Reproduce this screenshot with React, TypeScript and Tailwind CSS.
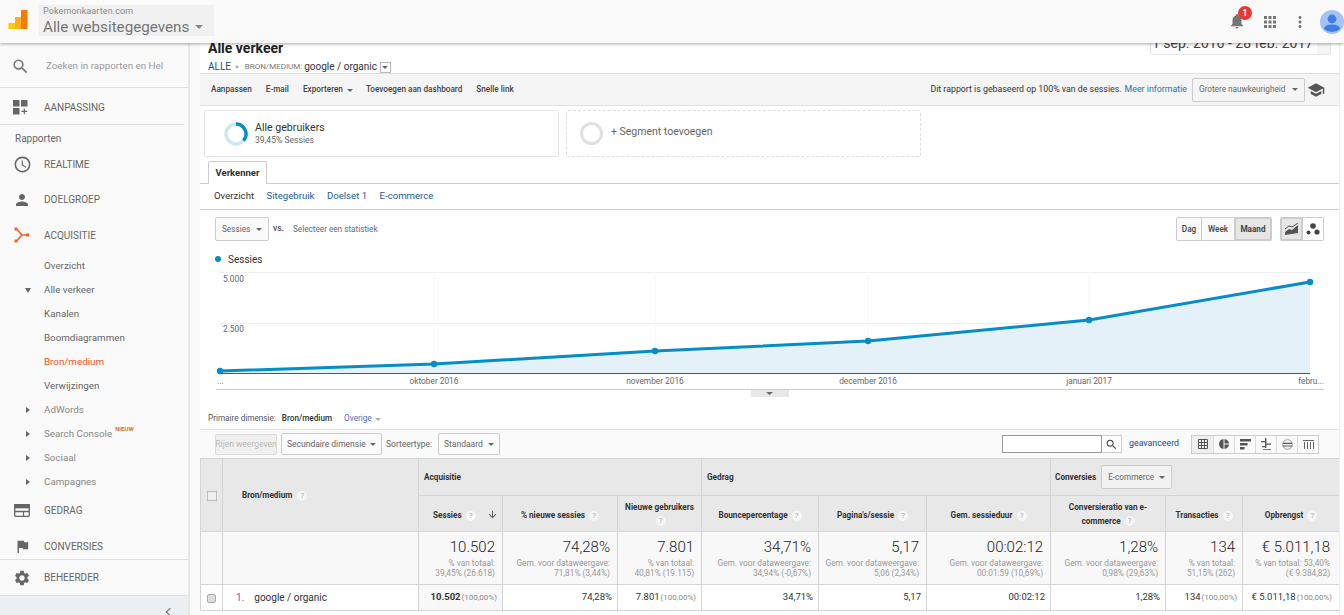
import React from "react";
import { MdPerson, MdAccessTime, MdFlag, MdSettings, MdNotifications, MdApps, MdMoreVert, MdSchool, MdSearch, MdArrowDownward, MdGridOn, MdPieChart } from "react-icons/md";

function Caret({ small, className = "" }: { small?: boolean; className?: string }) {
  return (
    <span
      className={`inline-block w-0 h-0 border-x-transparent ${small ? "border-x-[3px] border-t-[3px]" : "border-x-[4px] border-t-[4px]"} ${className || "border-t-[#666]"}`}
    />
  );
}

function Help({ className = "" }: { className?: string }) {
  return (
    <span className={`inline-flex w-[10px] h-[10px] rounded-full bg-[#f6f6f6] text-[#aaa] text-[8px] font-normal leading-none items-center justify-center align-middle ${className}`}>
      ?
    </span>
  );
}

function Logo() {
  return (
    <svg width="20" height="20" viewBox="0 0 20 20" className="-mt-[3px]">
      <rect x="0.5" y="13" width="7" height="6" rx="0.5" fill="#fdc90f" />
      <rect x="7" y="7" width="7" height="12" fill="#fbb016" />
      <rect x="13" y="0" width="6.5" height="19" rx="0.5" fill="#f57c00" />
    </svg>
  );
}

function CustomIcon() {
  return (
    <svg width="15" height="15" viewBox="0 0 15 15" fill="#666">
      <rect x="0" y="0" width="6.5" height="6.5" />
      <rect x="8" y="0" width="6.5" height="6.5" />
      <rect x="0" y="8" width="6.5" height="6.5" />
      <path d="M10.7 8.5h1.2v2.2h2.3v1.2h-2.3v2.3h-1.2v-2.3H8.4v-1.2h2.3z" />
    </svg>
  );
}

function AcqIcon() {
  return (
    <svg width="16" height="16" viewBox="0 0 16 16" fill="none" stroke="#f26522" strokeWidth="1.6">
      <path d="M2.5 2 L8 8 L2.5 14 M8 8 H14" />
      <rect x="0.5" y="0.5" width="3" height="3" fill="#f26522" stroke="none" />
      <rect x="0.5" y="12.5" width="3" height="3" fill="#f26522" stroke="none" />
      <circle cx="13.5" cy="8" r="1.8" fill="#f26522" stroke="none" />
    </svg>
  );
}

function BehaviorIcon() {
  return (
    <svg width="16" height="13" viewBox="0 0 16 13" fill="none" stroke="#666" strokeWidth="1.3">
      <rect x="0.7" y="0.7" width="14.6" height="11.6" rx="1" />
      <rect x="0.7" y="0.7" width="14.6" height="3" fill="#666" />
      <path d="M0.7 7.5 H15.3 M9.5 7.5 V12.3" />
    </svg>
  );
}

function NavMain({ icon, label }: { icon: React.ReactNode; label: string }) {
  return (
    <div className="h-[36px] flex items-center">
      <div className="w-[44px] flex justify-center text-[#666]">{icon}</div>
      <span className="text-[10px] text-[#666]">{label}</span>
    </div>
  );
}

function NavSub({ label, arrow, active, badge }: { label: string; arrow?: "down" | "right"; active?: boolean; badge?: boolean }) {
  return (
    <div className="h-[24px] flex items-center relative pl-[44px]">
      {arrow === "down" && <span className="absolute left-[25px] top-[10px] w-0 h-0 border-x-[3px] border-x-transparent border-t-[5px] border-t-[#666]" />}
      {arrow === "right" && <span className="absolute left-[26px] top-[9px] w-0 h-0 border-y-[3px] border-y-transparent border-l-[4px] border-l-[#666]" />}
      <span className={`text-[9.8px] ${active ? "text-[#f4511e]" : arrow === "right" ? "text-[#888]" : "text-[#666]"}`}>{label}</span>
      {badge && <sup className="text-[6px] font-bold text-[#e8710a] ml-[3px] -mt-[4px]">NIEUW</sup>}
    </div>
  );
}

function Sidebar() {
  return (
    <aside className="w-[188px] h-[572px] shrink-0 bg-[#fafafa] flex flex-col overflow-hidden">
      <div className="h-[45px] shrink-0 flex items-center border-b border-[#e0e0e0] pt-[3px]">
        <div className="w-[40px] flex justify-center">
          <MdSearch size={19} className="text-[#777]" />
        </div>
        <span className="ml-[6px] text-[9.8px] text-[#999]">Zoeken in rapporten en Hel</span>
      </div>
      <div className="h-[37px] shrink-0 flex items-center mr-[4px] border-b border-[#e0e0e0] pt-[3px]">
        <div className="w-[44px] flex justify-center pr-[3px]">
          <CustomIcon />
        </div>
        <span className="text-[10px] text-[#666]">AANPASSING</span>
      </div>
      <div className="h-[20px] shrink-0 pl-[15px] flex items-center text-[10px] text-[#666] mt-[3px]">Rapporten</div>
      <div className="-mt-[2px]">
        <NavMain icon={<MdAccessTime size={19} />} label="REALTIME" />
      </div>
      <NavMain icon={<MdPerson size={18} />} label="DOELGROEP" />
      <NavMain icon={<AcqIcon />} label="ACQUISITIE" />
      <div className="mt-[1px] -mb-[1px]">
        <NavSub label="Overzicht" />
        <NavSub label="Alle verkeer" arrow="down" />
        <NavSub label="Kanalen" />
        <NavSub label="Boomdiagrammen" />
        <NavSub label="Bron/medium" active />
        <NavSub label="Verwijzingen" />
        <NavSub label="AdWords" arrow="right" />
        <NavSub label="Search Console" arrow="right" badge />
        <NavSub label="Sociaal" arrow="right" />
        <NavSub label="Campagnes" arrow="right" />
      </div>
      <NavMain icon={<BehaviorIcon />} label="GEDRAG" />
      <NavMain icon={<MdFlag size={17} />} label="CONVERSIES" />
      <div className="-mt-[5px] border-t border-[#e0e0e0] h-[37px] shrink-0 flex items-center border-b">
        <div className="w-[44px] flex justify-center">
          <MdSettings size={18} className="text-[#666]" />
        </div>
        <span className="text-[10px] text-[#666]">BEHEERDER</span>
      </div>
      <div className="flex-1 bg-[#eceff1] flex justify-end pr-[15px] pt-[13px]">
        <span className="w-[6px] h-[6px] shrink-0 border-l border-b border-[#666] rotate-45" />
      </div>
    </aside>
  );
}

function Header() {
  return (
    <header className="relative z-10 h-[43px] bg-[#fafafa] shadow-[0_1px_3px_rgba(0,0,0,0.35)] flex items-center pl-[8px]">
      <Logo />
      <div className="ml-[11px] w-[175px] h-[31px] mt-[-3px] bg-[#f1f1f1] pl-[4px] flex flex-col justify-center">
        <div className="text-[9px] leading-[10px] tracking-[0.1px] text-[#888]">Pokemonkaarten.com</div>
        <div className="flex items-center text-[15.2px] leading-[19px] mt-[2px] -mb-[2px] text-[#757575]">
          Alle websitegegevens
          <Caret className="ml-[6px] border-t-[#888]" />
        </div>
      </div>
      <div className="flex-1" />
      <div className="relative mt-[-1px]">
        <MdNotifications size={18} className="text-[#757575]" />
        <span className="absolute -top-[6px] left-[10px] w-[14px] h-[14px] rounded-full bg-[#e53935] text-white text-[8.5px] font-bold flex items-center justify-center">1</span>
      </div>
      <MdApps size={18} className="text-[#757575] ml-[15px]" />
      <MdMoreVert size={18} className="text-[#757575] ml-[12px]" />
      <svg width="24" height="24" viewBox="0 0 24 24" className="ml-[11px]">
        <circle cx="12" cy="12" r="12" fill="#a3c2f7" />
        <circle cx="12" cy="9" r="4.4" fill="#3d7de4" />
        <path d="M4 19 Q4 14.5 12 14.5 Q20 14.5 20 19 Q16.5 22 12 22 Q7.5 22 4 19Z" fill="#3d7de4" />
      </svg>
    </header>
  );
}

function TitleBar() {
  return (
    <div className="h-[30px] flex items-start justify-between relative">
      <div className="pl-[8px]">
        <div className="text-[14px] leading-[12px] -mt-[1px] font-bold text-[#222]">Alle verkeer</div>
        <div className="flex items-center mt-[7px] text-[10px] leading-[12px]">
          <span className="text-[#15508f]">ALLE</span>
          <span className="text-[#777] text-[8px] ml-[4px] mr-[6px]">»</span>
          <span className="text-[#777] text-[8px]">BRON/MEDIUM:</span>
          <span className="text-[#333] ml-[2px]">google / organic</span>
          <span className="ml-[3px] w-[11px] h-[11px] border border-[#bbb] flex items-center justify-center">
            <span className="w-0 h-0 border-x-[3px] border-x-transparent border-t-[3px] border-t-[#666]" />
          </span>
        </div>
      </div>
      <div className="w-[181px] h-[17px] mr-[8px] -mt-[5px] border border-[#e5e5e5] border-t-0 rounded-b-[3px] flex items-start overflow-hidden">
        <span className="text-[14px] leading-[16px] -mt-[3px] pl-[1px] text-[#444] whitespace-nowrap">1 sep. 2016 - 28 feb. 2017</span>
        <span className="w-[13px] ml-auto h-full bg-[#f5f5f5]" />
      </div>
    </div>
  );
}

function ActionBar() {
  return (
    <div className="h-[33px] bg-[#f5f5f5] border-y border-[#e0e0e0] flex items-center pl-[11px] pr-[14px] text-[8.2px] font-medium text-[#444]">
      <span>Aanpassen</span>
      <span className="ml-[14px]">E-mail</span>
      <span className="ml-[14px]">Exporteren</span>
      <span className="ml-[4px]">
        <Caret small />
      </span>
      <span className="ml-[13px]">Toevoegen aan dashboard</span>
      <span className="ml-[14px]">Snelle link</span>
      <span className="ml-auto text-[8.8px] font-normal text-[#333]">Dit rapport is gebaseerd op 100% van de sessies.</span>
      <span className="ml-[3px] text-[8.8px] font-normal text-[#1a73b8]">Meer informatie</span>
      <div className="ml-[5px] w-[113px] h-[24px] border border-[#ccc] rounded-[2px] flex items-center justify-between px-[6px] font-normal text-[#666] text-[8.2px]">
        Grotere nauwkeurigheid
        <Caret small />
      </div>
      <MdSchool size={18} className="ml-[2px] text-[#555]" />
    </div>
  );
}

function Segments() {
  return (
    <div className="flex h-[47px] mt-[4px] ml-[4px] gap-[7px]">
      <div className="w-[355px] border border-[#e5e5e5] rounded-[2px] flex items-center pl-[19px]">
        <svg width="24" height="24" viewBox="0 0 24 24">
          <circle cx="12" cy="12" r="10" fill="none" stroke="#cfe7f3" strokeWidth="3.4" />
          <path d="M12 2 A10 10 0 0 1 19.5 18.6" fill="none" stroke="#058dc7" strokeWidth="3.4" />
        </svg>
        <div className="ml-[7px] -mt-[1px]">
          <div className="text-[10.6px] leading-[14px] text-[#333]">Alle gebruikers</div>
          <div className="text-[8.6px] leading-[11px] text-[#666]">39,45% Sessies</div>
        </div>
      </div>
      <div className="w-[355px] border border-dashed border-[#ddd] rounded-[2px] flex items-center pl-[13px]">
        <span className="w-[23px] h-[23px] rounded-full border-[3px] border-[#e0e0e0]" />
        <span className="ml-[8px] -mt-[3px] text-[10.5px] text-[#666]">+ Segment toevoegen</span>
      </div>
    </div>
  );
}

function Tabs() {
  return (
    <>
      <div className="h-[27px] pt-[4px] pl-[8px] border-b border-[#ccc]">
        <div className="w-[59px] h-[23px] border border-[#ccc] border-b-0 rounded-t-[2px] bg-white flex items-center justify-center text-[9.5px] font-bold text-[#333]">
          Verkenner
        </div>
      </div>
      <div className="h-[26px] border-b border-[#ccc] flex items-center pl-[14px] pb-[1px] gap-[12.5px] text-[9.6px] text-[#1a5c9a]">
        <span className="text-[#333]">Overzicht</span>
        <span>Sitegebruik</span>
        <span>Doelset 1</span>
        <span>E-commerce</span>
      </div>
    </>
  );
}

function ChartControls() {
  return (
    <div className="h-[24px] mt-[7px] flex items-center pl-[15px] pr-[15px]">
      <div className="w-[54px] h-[24px] border border-[#ccc] rounded-[2px] flex items-center justify-between px-[6px] text-[8.2px] text-[#666] bg-[#fafafa]">
        Sessies
        <Caret small />
      </div>
      <span className="ml-[4px] text-[8.5px] font-medium text-[#555] -mt-[2px]">vs.</span>
      <span className="ml-[9px] text-[8.2px] text-[#5a6d85]">Selecteer een statistiek</span>
      <div className="ml-auto flex items-stretch h-[24px] text-[8.2px] font-medium text-[#444]">
        <div className="w-[26px] flex items-center justify-center border border-[#ccc] rounded-l-[2px] bg-[#fafafa]">Dag</div>
        <div className="w-[32px] flex items-center justify-center border-y border-[#ccc] bg-[#fafafa]">Week</div>
        <div className="w-[38px] flex items-center justify-center border-2 border-[#ccc] rounded-r-[2px] bg-[#e6e6e6] font-bold">Maand</div>
        <div className="w-[23px] ml-[8px] flex items-center justify-center border-2 border-[#ccc] bg-[#e6e6e6] rounded-l-[2px]">
          <svg width="14" height="13" viewBox="0 0 14 13">
            <path d="M0 9 L4 6 L7 7 L13 2 L13 10 L0 12 Z" fill="#555" />
            <path d="M0 6 L4 3 L7 4 L13 0" fill="none" stroke="#555" strokeWidth="1" />
          </svg>
        </div>
        <div className="w-[21px] flex items-center justify-center border border-l-0 border-[#ccc] rounded-r-[2px]">
          <svg width="14" height="13" viewBox="0 0 14 13" fill="#444">
            <circle cx="7" cy="3" r="2.8" />
            <circle cx="2.5" cy="9.5" r="2" />
            <circle cx="11" cy="9" r="2.6" />
          </svg>
        </div>
      </div>
    </div>
  );
}

function Chart() {
  const pts: [number, number][] = [
    [20, 106],
    [234, 99],
    [455, 86],
    [668, 76],
    [889, 55],
    [1110, 17],
  ];
  const line = pts.map((p) => p.join(",")).join(" ");
  return (
    <>
      <div className="h-[14px] mt-[11px] pl-[15px] flex items-center text-[10px] text-[#333]">
        <span className="w-[6px] h-[6px] rounded-full bg-[#058dc7] mr-[7px]" />
        Sessies
      </div>
      <svg width="1139" height="133" viewBox="0 0 1139 133" className="block -mt-[1px]">
        <line x1="20" x2="1110" y1="7.5" y2="7.5" stroke="#eee" />
        <line x1="20" x2="1110" y1="58.5" y2="58.5" stroke="#eee" />
        {pts.slice(1, 5).map((p) => (
          <line key={p[0]} x1={p[0]} x2={p[0]} y1="7" y2="108" stroke="#f8f8f8" />
        ))}
        <polygon points={`20,108.5 ${line} 1110,108.5`} fill="#e5f1f8" />
        <polyline points={line} fill="none" stroke="#058dc7" strokeWidth="3" />
        {pts.map((p) => (
          <circle key={p[0]} cx={p[0]} cy={p[1]} r="3.2" fill="#058dc7" />
        ))}
        <line x1="20" x2="1110" y1="108.5" y2="108.5" stroke="#555" />
        <g fontFamily="Roboto" fontSize="8.3" fill="#666">
          <text x="23" y="17">5.000</text>
          <text x="23" y="67">2.500</text>
          <text x="17" y="119">...</text>
          <text x="234" y="119" textAnchor="middle">oktober 2016</text>
          <text x="455" y="119" textAnchor="middle">november 2016</text>
          <text x="668" y="119" textAnchor="middle">december 2016</text>
          <text x="889" y="119" textAnchor="middle">januari 2017</text>
          <text x="1124" y="119" textAnchor="end">febru...</text>
        </g>
        <line x1="16" x2="1124" y1="124.5" y2="124.5" stroke="#ccc" />
        <rect x="551" y="125" width="38" height="7" fill="#e8e8e8" />
        <path d="M566 127 h7 l-3.5 3 z" fill="#666" />
      </svg>
    </>
  );
}

const VIEW_ICONS = [
  <MdGridOn key="table" size={12} />,
  <MdPieChart key="pie" size={12} />,
  <svg key="bars" width="11" height="11" viewBox="0 0 11 11" fill="#555"><path d="M0 0h11v2.4H0zM0 4h7.5v2.4H0zM0 8h4.5v2.4H0z" /></svg>,
  <svg key="compare" width="11" height="12" viewBox="0 0 11 12" fill="#555"><path d="M4 0h1.4v10H4zM0 3h4v1.2H0zM5 5.5h5v1.2H5zM1 8h3v1.2H1zM2 11h8v.8H2z" /></svg>,
  <svg key="pivotish" width="11" height="11" viewBox="0 0 11 11"><circle cx="5.5" cy="5.5" r="4.8" fill="none" stroke="#999" /><path d="M1 3.8h9v1.2H1zM1 6.4h9v1.2H1z" fill="#555" /></svg>,
  <svg key="pivot" width="11" height="11" viewBox="0 0 11 11" fill="#666"><path d="M0 1h11v1H0zM1 3h1v7H1zM4 3h1v7H4zM7 3h1v7H7zM10 3h1v7h-1z" /></svg>,
];

function TableTools() {
  return (
    <>
      <div className="h-[32px] border-b border-[#e0e0e0] flex items-center pl-[8px] pt-[9px] text-[8.2px]">
        <span className="text-[#555]">Primaire dimensie:</span>
        <span className="ml-[6px] font-medium text-[#333]">Bron/medium</span>
        <span className="ml-[12px] text-[#5a6db0]">Overige</span>
        <span className="ml-[3px]">
          <Caret small className="border-t-[#aaa]" />
        </span>
      </div>
      <div className="h-[28px] bg-[#fafafa] flex items-center pl-[15px] pr-[20px] text-[8.5px] text-[#666]">
        <div className="w-[62px] h-[21px] border border-[#ddd] rounded-[2px] bg-[#f0f0f0] flex items-center justify-center text-[#bbb] whitespace-nowrap overflow-hidden">Rijen weergeven</div>
        <div className="ml-[4px] w-[101px] h-[22px] border border-[#ccc] rounded-[2px] flex items-center justify-between px-[5px]">
          Secundaire dimensie
          <Caret small />
        </div>
        <span className="ml-[4px]">Sorteertype:</span>
        <div className="ml-[6px] w-[62px] h-[22px] border border-[#ccc] rounded-[2px] flex items-center justify-between px-[5px]">
          Standaard
          <Caret small />
        </div>
        <div className="ml-auto flex items-center">
          <div className="w-[100px] h-[18px] border border-[#999] bg-white" />
          <div className="w-[20px] h-[18px] border border-l-0 border-[#ccc] bg-white flex items-center justify-center">
            <MdSearch size={13} className="text-[#444]" />
          </div>
          <span className="ml-[7px] text-[8.8px] text-[#15508f]">geavanceerd</span>
          <div className="ml-[12px] flex h-[19px] border border-[#ccc] bg-[#fafafa]">
            {VIEW_ICONS.map((ic, i) => (
              <div key={i} className={`w-[21px] flex items-center justify-center text-[#555] ${i > 0 ? "border-l border-[#ddd]" : "bg-[#eee]"}`}>
                {ic}
              </div>
            ))}
          </div>
        </div>
      </div>
    </>
  );
}

const COLS = [22, 196, 84, 115, 84, 117, 108, 124, 115, 77, 97];

const METRICS = [
  { head: "Sessies", big: "10.502", sub: ["% van totaal:", "39,45% (26.618)"], val: "10.502", pct: "(100,00%)", bold: true },
  { head: "% nieuwe sessies", big: "74,28%", sub: ["Gem. voor dataweergave:", "71,81% (3,44%)"], val: "74,28%" },
  { head: "Nieuwe gebruikers", big: "7.801", sub: ["% van totaal:", "40,81% (19.115)"], val: "7.801", pct: "(100,00%)", wraps: true },
  { head: "Bouncepercentage", big: "34,71%", sub: ["Gem. voor dataweergave:", "34,94% (-0,67%)"], val: "34,71%" },
  { head: "Pagina's/sessie", big: "5,17", sub: ["Gem. voor dataweergave:", "5,06 (2,34%)"], val: "5,17" },
  { head: "Gem. sessieduur", big: "00:02:12", sub: ["Gem. voor dataweergave:", "00:01:59 (10,69%)"], val: "00:02:12" },
  { head: "Conversieratio van e-commerce", big: "1,28%", sub: ["Gem. voor dataweergave:", "0,98% (29,63%)"], val: "1,28%", wraps: true },
  { head: "Transacties", big: "134", sub: ["% van totaal:", "51,15% (262)"], val: "134", pct: "(100,00%)" },
  { head: "Opbrengst", big: "€ 5.011,18", sub: ["% van totaal: 53,40%", "(€ 9.384,82)"], val: "€ 5.011,18", pct: "(100,00%)" },
];

function DataTable() {
  const cellB = "border border-[#d4d4d4]";
  return (
    <table className="table-fixed border-collapse w-[1139px] text-[8.2px] text-[#333]">
      <colgroup>
        {COLS.map((w, i) => (
          <col key={i} style={{ width: w }} />
        ))}
      </colgroup>
      <thead className="bg-[#e8e8e8]">
        <tr className="h-[37px]">
          <th rowSpan={2} className={cellB}>
            <span className="inline-block w-[10px] h-[10px] border border-[#bbb] bg-[#eee] align-middle" />
          </th>
          <th rowSpan={2} className={`${cellB} text-left pl-[19px] font-bold`}>
            Bron/medium <Help className="ml-[3px]" />
          </th>
          <th colSpan={3} className={`${cellB} text-left pl-[5px] font-bold`}>Acquisitie</th>
          <th colSpan={3} className={`${cellB} text-left pl-[5px] font-bold`}>Gedrag</th>
          <th colSpan={3} className={`${cellB} text-left pl-[4px] font-bold`}>
            <span className="flex items-center">
              Conversies
              <span className="ml-[5px] w-[71px] h-[24px] border border-[#ccc] rounded-[2px] bg-[#f2f2f2] flex items-center justify-between px-[6px] font-normal text-[#666]">
                E-commerce
                <Caret small />
              </span>
            </span>
          </th>
        </tr>
        <tr className="h-[36px]">
          {METRICS.map((m, i) => (
            <th key={m.head} className={`${cellB} font-bold leading-[14px] px-[5px] relative ${m.wraps ? "" : "pt-[3px]"} ${i === 0 ? "text-left pl-[14px]" : "text-center"}`}>
              {m.head} <Help className="ml-[2px]" />
              {i === 0 && <MdArrowDownward size={11} className="absolute right-[1px] top-[13px] text-[#555] mr-[3px]" />}
            </th>
          ))}
        </tr>
      </thead>
      <tbody>
        <tr className="h-[53px] bg-[#f8f8f8]">
          <td className={cellB} />
          <td className={cellB} />
          {METRICS.map((m, i) => (
            <td key={m.head} className={`${cellB} text-right align-middle ${i === 8 ? "pr-[9px]" : "pr-[7px]"}`}>
              <div className="text-[15px] leading-[18px] font-light text-[#222]">{m.big}</div>
              <div className="text-[8.3px] leading-[10px] text-[#999] whitespace-nowrap mt-[2px]">{m.sub[0]}</div>
              <div className="text-[8.3px] leading-[10px] text-[#999] whitespace-nowrap">{m.sub[1]}</div>
            </td>
          ))}
        </tr>
        <tr className="h-[26px]">
          <td className={`${cellB} text-center`}>
            <span className="inline-block w-[9px] h-[9px] border border-[#aaa] rounded-[2px] bg-[#ddd] align-middle" />
          </td>
          <td className={`${cellB} text-[10px] pl-[13px]`}>
            <span className="text-[#7b5aa6]">1.</span>
            <span className="ml-[10px]">google / organic</span>
          </td>
          {METRICS.map((m, i) => (
            <td key={m.head} className={`${cellB} text-right text-[9.5px] whitespace-nowrap ${i === 8 ? "pr-[7px]" : "pr-[5px]"} ${i === 0 ? "bg-[#f8f8f8]" : ""}`}>
              <span className={m.bold ? "font-bold" : ""}>{m.val}</span>
              {m.pct && <span className="text-[8px] text-[#888] ml-[1px]">{m.pct}</span>}
            </td>
          ))}
        </tr>
      </tbody>
    </table>
  );
}

export default function App() {
  return (
    <div className="w-[1344px] h-[615px] overflow-hidden bg-white font-['Roboto',sans-serif] flex flex-col">
      <Header />
      <div className="flex flex-1 min-h-0">
        <Sidebar />
        <div className="w-[12px] shrink-0 bg-[#fafafa] border-l-2 border-[#e8e8e8]" />
        <main className="w-[1139px] shrink-0">
          <TitleBar />
          <ActionBar />
          <Segments />
          <Tabs />
          <ChartControls />
          <Chart />
          <TableTools />
          <DataTable />
        </main>
        <div className="flex-1 border-l border-[#eee]" />
      </div>
    </div>
  );
}
